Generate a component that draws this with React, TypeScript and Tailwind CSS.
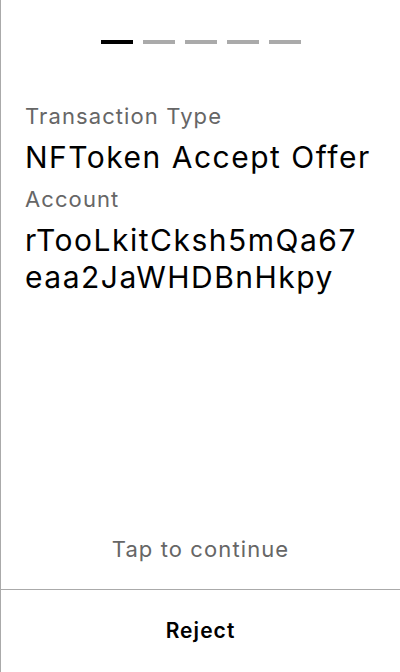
import React from "react";

type FieldProps = {
  label: string;
  value: string;
  mono?: boolean;
};

function Field({ label, value, mono }: FieldProps) {
  return (
    <div className="flex flex-col">
      <p className="text-[22px] leading-[26px] tracking-[0.05em] text-[#666666]">{label}</p>
      <p
        className={
          mono
            ? "mt-[10px] text-[30px] leading-[37px] tracking-[0.05em] text-black break-all"
            : "mt-[10px] text-[30px] leading-[37px] tracking-[0.05em] text-black whitespace-nowrap"
        }
      >
        {value}
      </p>
    </div>
  );
}

export default function App() {
  const steps = [0, 1, 2, 3, 4];
  return (
    <div
      className="flex h-[672px] w-[400px] flex-col border-l border-[#aaaaaa] bg-white"
      style={{ fontFamily: "Inter, 'Noto Sans', sans-serif" }}
    >
      <div className="flex justify-center gap-[10px] pt-10">
        {steps.map((s) => (
          <div
            key={s}
            className={s === 0 ? "h-1 w-8 bg-black" : "h-1 w-8 bg-[#aaaaaa]"}
          />
        ))}
      </div>

      <div className="mt-[59px] flex flex-col gap-[10px] pl-6 pr-[30px]">
        <Field label="Transaction Type" value="NFToken Accept Offer" />
        <Field label="Account" value="rTooLkitCksh5mQa67eaa2JaWHDBnHkpy" mono />
      </div>

      <div className="flex-1" />

      <p className="mb-[27px] text-center text-[22px] leading-[26px] tracking-[0.05em] text-[#666666]">
        Tap to continue
      </p>

      <button className="flex h-[83px] items-center justify-center border-t border-[#aaaaaa] text-[21px] font-semibold tracking-[0.05em] text-black">
        Reject
      </button>
    </div>
  );
}
